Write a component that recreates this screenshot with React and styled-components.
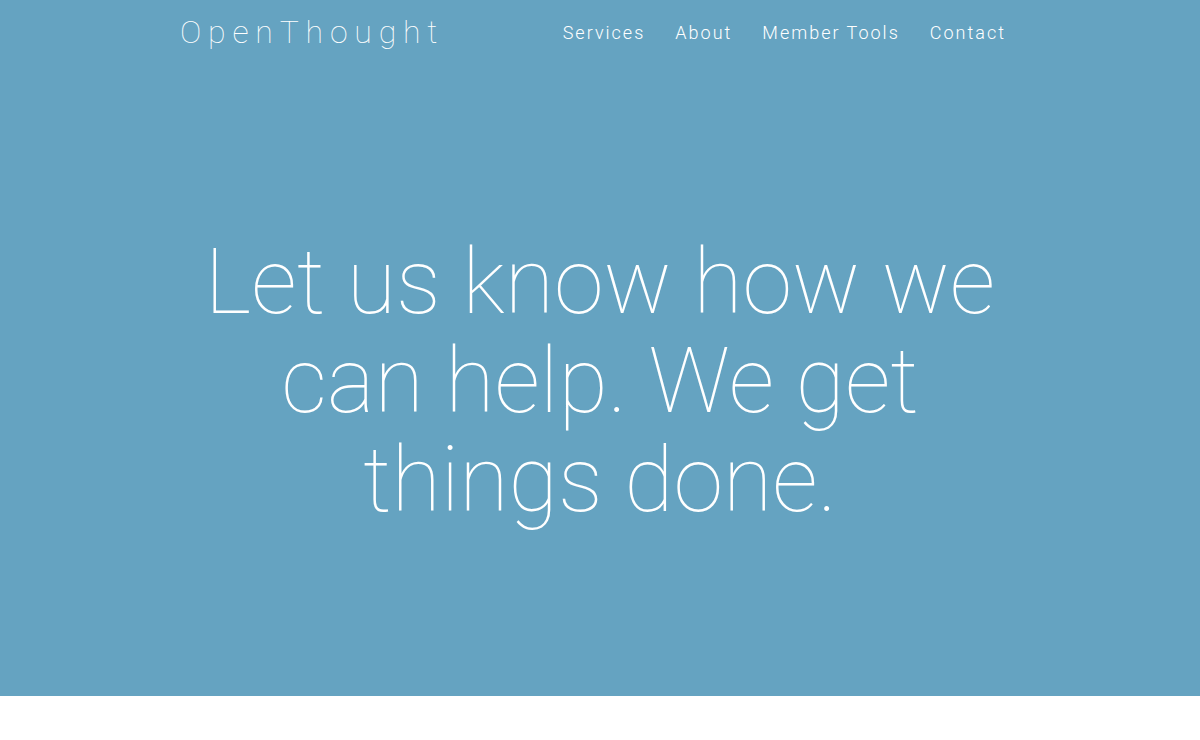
import styled, { createGlobalStyle } from "styled-components";

const GlobalStyle = createGlobalStyle`
  html, body {
    margin: 0;
    padding: 0;
    background: #fff;
    font-family: Roboto, "Helvetica Neue", Arial, sans-serif;
  }
`;

const navItems = ["Services", "About", "Member Tools", "Contact"];

const App = () => {
  return (
    <>
      <GlobalStyle />
      <Hero>
        <Header>
          <Logo>OpenThought</Logo>
          <Nav>
            {navItems.map((item) => (
              <NavLink key={item} href="#">
                {item}
              </NavLink>
            ))}
          </Nav>
        </Header>
        <Headline>
          Let us know how we can help. We get things done.
        </Headline>
      </Hero>
    </>
  );
};

const Hero = styled.section`
  background-color: #65a3c1;
  height: 696px;
  display: flex;
  flex-direction: column;
`;

const Header = styled.header`
  display: flex;
  align-items: center;
  justify-content: space-between;
  padding: 12px 194px 0 180px;
  height: 40px;
`;

const Logo = styled.a`
  color: #fff;
  font-size: 32px;
  font-weight: 100;
  letter-spacing: 6.8px;
  text-decoration: none;
`;

const Nav = styled.nav`
  display: flex;
  gap: 30px;
`;

const NavLink = styled.a`
  color: #fff;
  font-size: 18px;
  font-weight: 300;
  letter-spacing: 2px;
  text-decoration: none;
`;

const Headline = styled.h1`
  margin: 181px auto 0;
  max-width: 840px;
  color: #fff;
  text-align: center;
  font-size: 90px;
  line-height: 99px;
  font-weight: 100;
`;

export default App;
